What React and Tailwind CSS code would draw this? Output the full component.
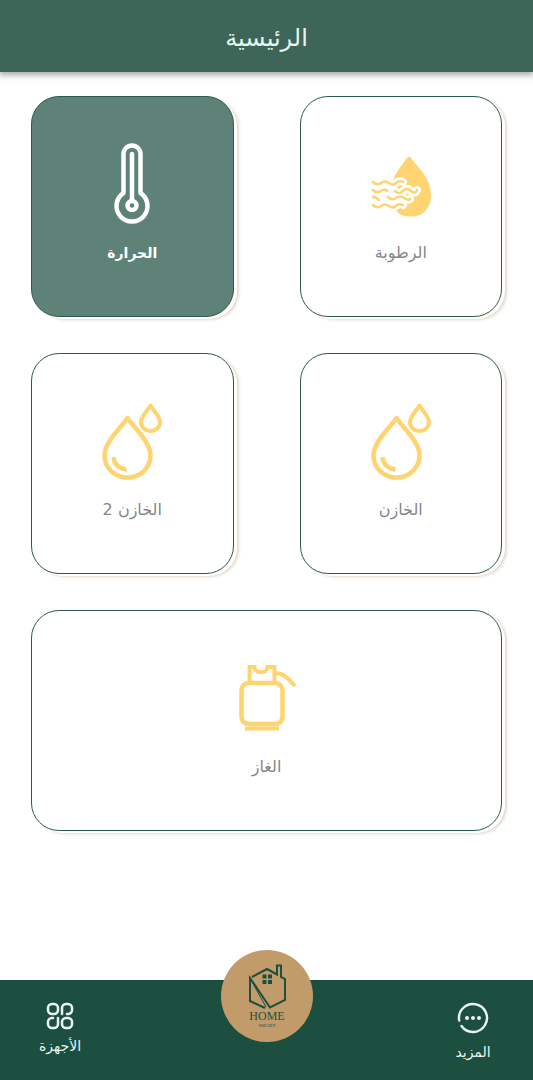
function Thermometer() {
  return (
    <svg viewBox="0 0 80 80" className="size-20 overflow-visible" fill="none" stroke="currentColor" aria-hidden="true">
      <path d="M31.500 50V11a8.500 8.500 0 0 1 17 0v39a15.500 15.500 0 1 1-17 0Z" strokeWidth="4.500" strokeLinejoin="round" />
      <path d="M40 11v46" strokeWidth="4.500" strokeLinecap="round" />
      <circle cx="40" cy="62.500" r="4.500" strokeWidth="4.500" className="fill-[#5e8277]" />
    </svg>
  );
}

function Humidity() {
  const waves = [
    "M12 39q4 4 8 1t8 0t7 0t7-1",
    "M12 47q4 4 8 1t6 0M34 48q4 4 8 0t8 0t6-1",
    "M12 54q3 0 6 3M27 54q4 4 8 1t8 0t6 1",
    "M12 62q4 4 8 1t8 0t7 0t7-1",
  ];
  return (
    <svg viewBox="0 0 80 80" className="size-20" fill="none" strokeLinecap="round" strokeLinejoin="round" aria-hidden="true">
      <path d="M46 15Q48 12.500 50 15C59 26 70 37 70 52C70 64 63 73.500 51 73.500C43 73.500 38 72 34 66L31 41C32 34 39 24 46 15Z" fill="currentColor" />
      {waves.map((d) => <path key={d} d={d} stroke="#fff" strokeWidth="8" />)}
      {waves.map((d) => <path key={d} d={d} stroke="currentColor" strokeWidth="2.500" />)}
    </svg>
  );
}

function Drops() {
  return (
    <svg viewBox="0 0 80 80" className="size-20 overflow-visible" fill="none" stroke="currentColor" strokeWidth="4.500" strokeLinejoin="round" aria-hidden="true">
      <path d="M35.500 18C28 29 12.500 42 12.500 55.500a23 22 0 0 0 46 0C58.500 42 43 29 35.500 18Z" />
      <path d="M21.500 57C22 64 27 69 34.500 69.500" strokeWidth="4.500" />
      <path d="M58.500 5.500C55.500 11 49 16.500 49 22a9.500 9 0 0 0 19 0C68 16.500 61.500 11 58.500 5.500Z" strokeWidth="4" />
    </svg>
  );
}

function GasCylinder() {
  return (
    <svg viewBox="0 0 80 80" className="size-20" fill="none" stroke="currentColor" strokeWidth="4.500" aria-hidden="true">
      <rect x="14.500" y="26" width="41" height="41" rx="7" />
      <path d="M22.500 26V10h5c0 7 13 7 13 0h7v16M47 16c8-1 13 4 21 13" strokeWidth="4" />
      <path d="M18 71.500h34" strokeWidth="4" />
    </svg>
  );
}

function HomeLogo() {
  return (
    <svg viewBox="0 0 92 92" className="size-[92px]" fill="none" stroke="#1c4f3f" strokeWidth="2" aria-hidden="true">
      <path d="M31 27L46 19L56 24.500V15.500H60V27L64 29V50L49 57.500L29 28V51L44 58" />
      <path d="M30 30L45 57" strokeWidth="1" />
      <path d="M41.500 24.500h4v4h-4zM47 24.500h4v4h-4zM41.500 30h4v4h-4zM47 30h4v4h-4z" fill="#1c4f3f" stroke="none" />
      <text x="46" y="70" textAnchor="middle" fontFamily="Liberation Serif, serif" fontSize="12" fill="#1c4f3f" stroke="none">HOME</text>
      <text x="46" y="77" textAnchor="middle" fontFamily="Liberation Serif, serif" fontSize="5" fill="#1c4f3f" stroke="none">SMART</text>
    </svg>
  );
}

function DevicesIcon() {
  return (
    <svg viewBox="0 0 28 28" className="size-7" fill="none" stroke="currentColor" strokeWidth="2.500" strokeLinejoin="round" strokeLinecap="round" aria-hidden="true">
      <rect x="2" y="2" width="10" height="10" rx="4" />
      <path d="M16 12V6a4 4 0 0 1 4-4h2a4 4 0 0 1 4 4v2a4 4 0 0 1-4 4h-1" />
      <path d="M7 16H6a4 4 0 0 0-4 4v2a4 4 0 0 0 4 4h2a4 4 0 0 0 4-4v-6" />
      <rect x="16" y="16" width="10" height="10" rx="4" />
    </svg>
  );
}

function MoreIcon() {
  return (
    <svg viewBox="0 0 32 32" className="size-8" fill="none" stroke="currentColor" strokeWidth="2.400" strokeLinecap="round" aria-hidden="true">
      <path d="M2.200 18.500A14 14 0 1 1 4.500 24" />
      <g fill="currentColor" stroke="none">
        <circle cx="10" cy="16" r="2" />
        <circle cx="16" cy="16" r="2" />
        <circle cx="22" cy="16" r="2" />
      </g>
    </svg>
  );
}

const cards = [
  { label: "الرطوبة", Icon: Humidity },
  { label: "الحرارة", Icon: Thermometer, active: true },
  { label: "الخازن", Icon: Drops },
  { label: "الخازن 2", Icon: Drops },
  { label: "الغاز", Icon: GasCylinder, wide: true },
];

function Card({ label, Icon, active, wide }) {
  return (
    <button
      type="button"
      className={
        "flex h-[221px] flex-col items-center justify-center gap-4 rounded-[28px] border border-[#2c5a4b] pb-1 shadow-[3px_2px_0_0_#fff,5px_3px_3px_0_#e6d9cc] " +
        (active ? "bg-[#5e8277] " : "bg-white ") +
        (wide ? "col-span-2" : "")
      }
    >
      <span className={active ? "text-white" : "text-[#ffd470]"}>
        <Icon />
      </span>
      <span className={"leading-7 " + (active ? "text-sm/7 font-bold text-white" : "text-base/7 text-[#858585]")}>{label}</span>
    </button>
  );
}

export default function App() {
  return (
    <div dir="rtl" lang="ar" className="flex min-h-screen flex-col bg-white font-['DejaVu_Sans',sans-serif]">
      <header className="flex h-[72px] items-center justify-center bg-[#3d6558] pt-1 shadow-[0_2px_6px_1px_rgba(0,0,0,0.35)]">
        <h1 className="text-2xl text-[#e8f5f1]">الرئيسية</h1>
      </header>
      <main className="grid flex-1 grid-cols-2 content-start gap-x-[66px] gap-y-9 px-[31px] pt-6 pb-16">
        {cards.map((card) => <Card key={card.label} {...card} />)}
      </main>
      <nav className="relative flex h-[100px] items-start justify-between bg-[#1c4f3f] px-8 pt-[22px] text-[#e8f5f1]">
        <a href="#more" className="flex w-14 flex-col items-center gap-1.5">
          <MoreIcon />
          <span className="text-sm leading-6">المزيد</span>
        </a>
        <a href="#home" aria-label="الرئيسية" className="absolute -top-[30px] left-1/2 -translate-x-1/2 rounded-full bg-[#c29b6a]">
          <HomeLogo />
        </a>
        <a href="#devices" className="flex w-14 flex-col items-center gap-1">
          <DevicesIcon />
          <span className="text-sm leading-6">الأجهزة</span>
        </a>
      </nav>
    </div>
  );
}
